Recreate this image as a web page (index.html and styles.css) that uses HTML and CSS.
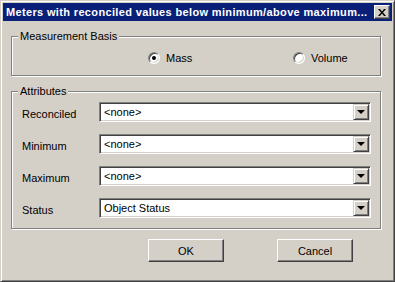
FILE: index.html
```html
<!DOCTYPE html>
<html lang="en">

<head>
  <meta charset="UTF-8" />
  <title>Meters with reconciled values below minimum/above maximum</title>
  <link rel="stylesheet" href="styles.css">
</head>

<body>
  <div class="dialog">
    <div class="titlebar">
      <span class="title">Meters with reconciled values below minimum/above maximum...</span>
      <button class="close">
        <svg width="8" height="7" viewBox="0 0 8 7"><path d="M0 0h2l2 2.5L6 0h2L5 3.5 8 7H6L4 4.5 2 7H0l3-3.5z" fill="#000"/></svg>
      </button>
    </div>

    <div class="content">
      <!-- measurement basis -->
      <fieldset class="group basis">
        <legend>Measurement Basis</legend>
        <div class="radios">
          <label class="radio checked"><span class="dot"></span>Mass</label>
          <label class="radio"><span class="dot"></span>Volume</label>
        </div>
      </fieldset>

      <!-- attributes -->
      <fieldset class="group attrs">
        <legend>Attributes</legend>
        <div class="rows">
          <div class="row">
            <span class="lbl">Reconciled</span>
            <div class="combo"><span class="value">&lt;none&gt;</span><span class="arrow"></span></div>
          </div>
          <div class="row">
            <span class="lbl">Minimum</span>
            <div class="combo"><span class="value">&lt;none&gt;</span><span class="arrow"></span></div>
          </div>
          <div class="row">
            <span class="lbl">Maximum</span>
            <div class="combo"><span class="value">&lt;none&gt;</span><span class="arrow"></span></div>
          </div>
          <div class="row">
            <span class="lbl">Status</span>
            <div class="combo"><span class="value">Object Status</span><span class="arrow"></span></div>
          </div>
        </div>
      </fieldset>

      <div class="buttons">
        <button class="btn">OK</button>
        <button class="btn">Cancel</button>
      </div>
    </div>
  </div>
</body>

</html>
```

FILE: styles.css
```css
* {
  box-sizing: border-box;
}

body {
  margin: 0;
  font-family: "Liberation Sans", Arial, sans-serif;
  font-size: 11px;
  color: #000;
}

.dialog {
  width: 395px;
  height: 282px;
  background: #d4d0c8;
  border: 1px solid;
  border-color: #d4d0c8 #404040 #404040 #d4d0c8;
  box-shadow: inset 1px 1px #fff, inset -1px -1px #808080;
  padding: 2px;
  display: flex;
  flex-direction: column;
}

.titlebar {
  height: 18px;
  background: #0a1f78;
  color: #fff;
  font-weight: bold;
  display: flex;
  align-items: center;
  padding: 0 2px 0 3px;
}

.title {
  flex: 1;
  white-space: nowrap;
  overflow: hidden;
  letter-spacing: 0.35px;
}

.close {
  width: 16px;
  height: 14px;
  padding: 0;
  margin-left: 4px;
  background: #d4d0c8;
  border: 1px solid;
  border-color: #fff #404040 #404040 #fff;
  box-shadow: inset -1px -1px #808080;
  display: flex;
  align-items: center;
  justify-content: center;
}

.content {
  flex: 1;
  padding: 9px 11px 0 8px;
}

.group {
  margin: 0;
  padding: 0;
  min-width: 0;
  border: 1px solid #808080;
  box-shadow: inset 1px 1px #fff, 1px 1px #fff;
}

.group legend {
  margin-left: 6px;
  padding: 0 2px;
  line-height: 13px;
  background: #d4d0c8;
}

/* radios */
.radios {
  display: flex;
  padding: 9px 0 11px 136px;
}

.radio {
  display: flex;
  align-items: center;
  gap: 6px;
  height: 12px;
}

.radio:first-child {
  width: 145px;
}

.dot {
  width: 12px;
  height: 12px;
  border-radius: 50%;
  border: 1px solid;
  border-color: #808080 #fff #fff #808080;
  box-shadow: inset 1px 1px #404040, inset -1px -1px #d4d0c8;
  background: #fff;
  position: relative;
}

.radio.checked .dot::after {
  content: "";
  position: absolute;
  left: 3px;
  top: 3px;
  width: 4px;
  height: 4px;
  border-radius: 50%;
  background: #000;
}

/* attribute rows */
.attrs {
  margin-top: 9px;
}

.rows {
  display: flex;
  flex-direction: column;
  gap: 12px;
  padding: 4px 9px 10px 10px;
}

.row {
  display: flex;
  align-items: flex-end;
}

.lbl {
  width: 77px;
  line-height: 13px;
  margin-bottom: 1px;
}

.combo {
  flex: 1;
  height: 20px;
  background: #fff;
  border: 1px solid;
  border-color: #808080 #fff #fff #808080;
  box-shadow: inset 1px 1px #404040, inset -1px -1px #d4d0c8;
  padding: 1px;
  display: flex;
  align-items: center;
}

.value {
  flex: 1;
  padding-left: 3px;
}

.arrow {
  width: 16px;
  height: 16px;
  background: #d4d0c8;
  border: 1px solid;
  border-color: #d4d0c8 #404040 #404040 #d4d0c8;
  box-shadow: inset 1px 1px #fff, inset -1px -1px #808080;
  position: relative;
}

.arrow::after {
  content: "";
  position: absolute;
  left: 3px;
  top: 5px;
  border-left: 4px solid transparent;
  border-right: 4px solid transparent;
  border-top: 4px solid #000;
}

/* buttons */
.buttons {
  display: flex;
  justify-content: flex-end;
  gap: 53px;
  padding: 10px 28px 0 0;
}

.btn {
  width: 76px;
  height: 23px;
  padding: 0;
  font-family: inherit;
  font-size: 11px;
  color: #000;
  background: #d4d0c8;
  border: 1px solid;
  border-color: #fff #404040 #404040 #fff;
  box-shadow: inset -1px -1px #808080;
}
```
